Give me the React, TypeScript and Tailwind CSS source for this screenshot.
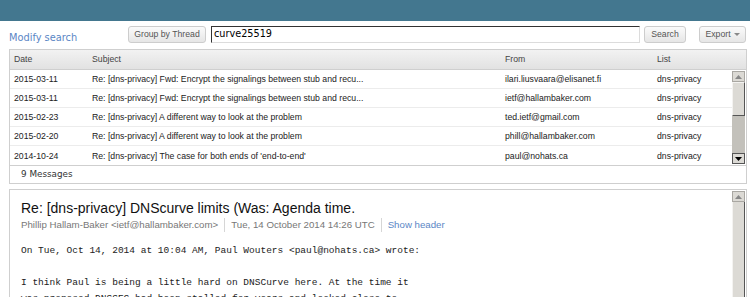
import React from "react";

const rows = [
  ["2015-03-11", "Re: [dns-privacy] Fwd: Encrypt the signalings between stub and recu...", "ilari.liusvaara@elisanet.fi", "dns-privacy"],
  ["2015-03-11", "Re: [dns-privacy] Fwd: Encrypt the signalings between stub and recu...", "ietf@hallambaker.com", "dns-privacy"],
  ["2015-02-23", "Re: [dns-privacy] A different way to look at the problem", "ted.ietf@gmail.com", "dns-privacy"],
  ["2015-02-20", "Re: [dns-privacy] A different way to look at the problem", "phill@hallambaker.com", "dns-privacy"],
  ["2014-10-24", "Re: [dns-privacy] The case for both ends of 'end-to-end'", "paul@nohats.ca", "dns-privacy"],
];

function Btn({ children, className = "" }: { children: React.ReactNode; className?: string }) {
  return (
    <div
      className={`h-[17px] rounded-[3px] border border-[#cdcdcd] bg-linear-to-b from-[#fbfbfb] to-[#e6e6e6] text-[8.7px] text-[#555] flex items-center justify-center ${className}`}
    >
      {children}
    </div>
  );
}

function UpArrow({ dark }: { dark?: boolean }) {
  return (
    <svg width="7" height="4" viewBox="0 0 7 4">
      <path d="M0 4 L3.5 0 L7 4 Z" fill={dark ? "#000" : "#888"} />
    </svg>
  );
}
function DownArrow() {
  return (
    <svg width="7" height="4" viewBox="0 0 7 4">
      <path d="M0 0 L3.5 4 L7 0 Z" fill="#000" />
    </svg>
  );
}

export default function App() {
  return (
    <div className="w-[750px] h-[297px] overflow-hidden bg-white font-['Liberation_Sans',Arial,sans-serif]">
      <div className="h-[21px] bg-[#43778f]" />
      <div className="flex items-start pl-[9px] mt-[5px] h-[17px]">
        <div className="w-[119px] pt-[5px] text-[9.8px] leading-[13px] text-[#5a86c5] font-['DejaVu_Sans',sans-serif]">
          Modify search
        </div>
        <Btn className="w-[78px]">Group by Thread</Btn>
        <div className="ml-[5px] w-[429px] h-[17px] border-t border-l border-[#333] border-r border-b border-r-[#dcdcdc] border-b-[#dcdcdc] pl-[2px] flex items-center text-[9.7px] text-black font-['DejaVu_Sans',sans-serif]">
          curve25519
        </div>
        <Btn className="ml-[4px] w-[42px]">Search</Btn>
        <Btn className="ml-[13px] w-[47px] gap-[3px]">
          Export
          <svg width="6" height="3" viewBox="0 0 6 3">
            <path d="M0 0 L3 3 L6 0 Z" fill="#888" />
          </svg>
        </Btn>
      </div>

      <div className="ml-[9px] mt-[6px] w-[738px] border border-[#cfcfcf]">
        <div className="flex h-[20px] items-center bg-linear-to-b from-[#f2f2f2] to-[#e2e2e2] border-b border-[#cfcfcf] text-[8.7px] text-[#444]">
          <div className="w-[78px] pl-[4px]">Date</div>
          <div className="w-[413px] pl-[4px]">Subject</div>
          <div className="w-[152px] pl-[4px]">From</div>
          <div className="flex-1 pl-[4px]">List</div>
        </div>
        <div className="flex">
          <div className="flex-1">
            {rows.map((r, i) => (
              <div
                key={i}
                className={`flex h-[19px] items-center pt-[2px] text-[8.7px] text-[#222] ${i < rows.length - 1 ? "border-b border-[#ececec]" : ""}`}
              >
                <div className="w-[78px] pl-[4px]">{r[0]}</div>
                <div className="w-[413px] pl-[4px]">{r[1]}</div>
                <div className="w-[152px] pl-[4px]">{r[2]}</div>
                <div className="flex-1 pl-[4px]">{r[3]}</div>
              </div>
            ))}
          </div>
          <div className="w-[13px] mr-[1px] my-[1px] flex flex-col bg-[#c3c1bb]">
            <div className="h-[11px] bg-[#dcdad5] border border-[#a9a7a2] flex items-center justify-center">
              <UpArrow />
            </div>
            <div className="h-[34px] bg-[#dcdad5] border-l border-t border-[#f4f3f1] border-r border-b border-r-[#555] border-b-[#555]" />
            <div className="flex-1" />
            <div className="h-[11px] bg-[#dcdad5] border border-[#555] flex items-center justify-center">
              <DownArrow />
            </div>
          </div>
        </div>
        <div className="h-[18px] border-t border-[#cfcfcf] flex items-center pl-[11px] text-[8.8px] text-[#333] font-['DejaVu_Sans',sans-serif]">
          9 Messages
        </div>
      </div>

      <div className="ml-[9px] mt-[5px] w-[738px] h-[120px] border border-[#cfcfcf] flex">
        <div className="flex-1 pl-[11px] pt-[10px]">
          <div className="text-[14px] leading-[17px] text-[#111]">
            Re: [dns-privacy] DNScurve limits (Was: Agenda time.
          </div>
          <div className="mt-[1px] flex items-center text-[9.7px] text-[#777] leading-[14px]">
            <span>Phillip Hallam-Baker &lt;ietf@hallambaker.com&gt;</span>
            <span className="mx-[6px] w-px h-[14px] bg-[#d6d6d6]" />
            <span>Tue, 14 October 2014 14:26 UTC</span>
            <span className="mx-[6px] w-px h-[14px] bg-[#d6d6d6]" />
            <span className="text-[#5a86c5]">Show header</span>
          </div>
          <pre className="mt-[11px] font-['Liberation_Mono',monospace] text-[9.5px] leading-[16px] text-[#222]">
{`On Tue, Oct 14, 2014 at 10:04 AM, Paul Wouters <paul@nohats.ca> wrote:

I think Paul is being a little hard on DNSCurve here. At the time it
was proposed DNSSEC had been stalled for years and looked close to`}
          </pre>
        </div>
        <div className="w-[13px] mr-[1px] mt-[1px] flex flex-col">
          <div className="h-[11px] bg-[#dcdad5] border border-[#a9a7a2] flex items-center justify-center">
            <UpArrow />
          </div>
          <div className="flex-1 bg-[#dcdad5] border-l border-[#f4f3f1] border-r border-r-[#555]" />
        </div>
      </div>
    </div>
  );
}
